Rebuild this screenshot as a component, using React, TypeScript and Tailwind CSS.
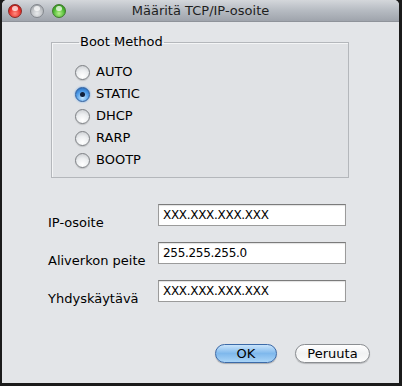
import React from "react";

const FONT = { fontFamily: '"Lucida Grande", "DejaVu Sans", "Liberation Sans", sans-serif' };

function Light({ color }: { color: "red" | "gray" | "green" }) {
  const fill =
    color === "red"
      ? "bg-[radial-gradient(circle_at_50%_70%,#ff8c80_0%,#e8302a_55%,#9c1410_100%)] border-[#8a2a26]"
      : color === "green"
      ? "bg-[radial-gradient(circle_at_50%_70%,#b6f08a_0%,#4cb832_55%,#2b7a18_100%)] border-[#3f7a2d]"
      : "bg-[radial-gradient(circle_at_50%_70%,#e8eaec_0%,#b9bcc0_60%,#8e9298_100%)] border-[#83878d]";
  return (
    <div className={`relative h-[14px] w-[14px] rounded-full border ${fill}`}>
      <div className="absolute left-[3px] top-[1px] h-[5px] w-[6px] rounded-full bg-white/70" />
    </div>
  );
}

function Radio({ label, checked }: { label: string; checked?: boolean }) {
  return (
    <div className="flex h-[22px] items-center gap-[6px]">
      {checked ? (
        <div className="flex h-[15px] w-[15px] items-center justify-center rounded-full border border-[#2f5f9e] bg-[radial-gradient(circle_at_50%_75%,#c4e6ff_0%,#4d9ae6_55%,#1f5fae_100%)] shadow-[0_0_2px_#5aa0ea]">
          <div className="h-[5px] w-[5px] rounded-full bg-[#10203a]" />
        </div>
      ) : (
        <div className="h-[15px] w-[15px] rounded-full border border-[#7d8084] bg-[radial-gradient(circle_at_50%_80%,#ffffff_0%,#eceef0_50%,#c3c6ca_100%)] shadow-[0_1px_1px_rgba(0,0,0,0.15)]" />
      )}
      <span className="text-[13px] text-black">{label}</span>
    </div>
  );
}

function Field({ label, value }: { label: string; value: string }) {
  return (
    <div className="flex items-end">
      <span className="mb-[-5px] w-[110px] text-[13px] leading-[16px] text-black">{label}</span>
      <div className="flex h-[22px] w-[188px] items-center border border-[#9b9b9b] border-t-[#7b7b7b] bg-white pl-[4px] shadow-[inset_0_1px_1px_rgba(0,0,0,0.12)]">
        <span className="text-[12px] tracking-[-0.3px] text-black">{value}</span>
      </div>
    </div>
  );
}

export default function App() {
  return (
    <div className="h-[386px] w-[402px] bg-[#1b1b1b]" style={FONT}>
      <div className="ml-[2px] flex h-[383px] w-[397px] flex-col overflow-hidden rounded-t-[5px] bg-[#e3e5e8]">
        {/* Title bar */}
        <div className="relative flex h-[22px] items-center justify-center border-b border-[#8f939a] bg-gradient-to-b from-[#d4d7db] via-[#b6bbc2] to-[#9fa4ac]">
          <div className="absolute left-[6px] top-[4px] flex gap-[8px]">
            <Light color="red" />
            <Light color="gray" />
            <Light color="green" />
          </div>
          <span className="text-[13px] text-[#1e1e1e]">Määritä TCP/IP-osoite</span>
        </div>

        {/* Body */}
        <div className="flex flex-1 flex-col pl-[46px]">
          <fieldset className="ml-[3px] mt-[12px] h-[144px] w-[298px] border border-[#b4b7bb] bg-[#e0e2e5] pl-[23px] pt-[11px] shadow-[inset_1px_1px_0_#f4f5f6]">
            <legend className="ml-[4px] px-[1px] text-[13px] leading-[16px] text-black">Boot Method</legend>
            <Radio label="AUTO" />
            <Radio label="STATIC" checked />
            <Radio label="DHCP" />
            <Radio label="RARP" />
            <Radio label="BOOTP" />
          </fieldset>

          <div className="mt-[26px] flex flex-col gap-[16px]">
            <Field label="IP-osoite" value="XXX.XXX.XXX.XXX" />
            <Field label="Aliverkon peite" value="255.255.255.0" />
            <Field label="Yhdyskäytävä" value="XXX.XXX.XXX.XXX" />
          </div>

          <div className="mr-[29px] mt-[42px] flex justify-end gap-[18px]">
            <button className="h-[19px] w-[62px] rounded-full border border-[#3c6aa8] bg-gradient-to-b from-[#c9e4fb] via-[#7fb8ec] to-[#a9d4f7] text-[13px] leading-[17px] text-black shadow-[0_1px_1px_rgba(0,0,0,0.25)]">
              OK
            </button>
            <button className="h-[19px] w-[75px] rounded-full border border-[#8a8d91] bg-gradient-to-b from-[#ffffff] via-[#f1f2f3] to-[#fcfcfc] text-[13px] leading-[17px] text-black shadow-[0_1px_1px_rgba(0,0,0,0.2)]">
              Peruuta
            </button>
          </div>
        </div>
      </div>
    </div>
  );
}
